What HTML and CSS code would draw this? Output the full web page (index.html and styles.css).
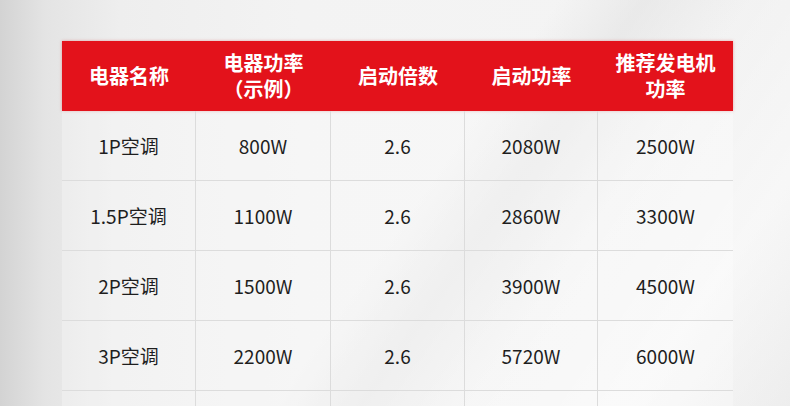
FILE: index.html
```html
<!DOCTYPE html>
<html lang="zh">
<head>
<meta charset="utf-8">
<link rel="stylesheet" href="styles.css">
</head>
<body>
<div class="page">
  <div class="table">
    <div class="head">
      <div class="hc">电器名称</div>
      <div class="hc">电器功率<br>（示例）</div>
      <div class="hc">启动倍数</div>
      <div class="hc">启动功率</div>
      <div class="hc">推荐发电机<br>功率</div>
    </div>
    <div class="row"><div class="c">1P空调</div><div class="c">800W</div><div class="c">2.6</div><div class="c">2080W</div><div class="c">2500W</div></div>
    <div class="row"><div class="c">1.5P空调</div><div class="c">1100W</div><div class="c">2.6</div><div class="c">2860W</div><div class="c">3300W</div></div>
    <div class="row"><div class="c">2P空调</div><div class="c">1500W</div><div class="c">2.6</div><div class="c">3900W</div><div class="c">4500W</div></div>
    <div class="row"><div class="c">3P空调</div><div class="c">2200W</div><div class="c">2.6</div><div class="c">5720W</div><div class="c">6000W</div></div>
    <div class="row"><div class="c"></div><div class="c"></div><div class="c"></div><div class="c"></div><div class="c"></div></div>
  </div>
</div>
</body>
</html>
```

FILE: styles.css
```css
html, body {
  margin: 0;
  padding: 0;
}
body {
  width: 790px;
  height: 406px;
  overflow: hidden;
  font-family: "Noto Sans CJK SC", "Noto Sans", sans-serif;
  background:
    linear-gradient(125deg, rgba(255,255,255,0) 0%, rgba(255,255,255,0) 52%, rgba(225,225,225,0.55) 60%, rgba(255,255,255,0) 70%, rgba(255,255,255,0.4) 85%, rgba(230,230,230,0.4) 100%),
    linear-gradient(to right, #d3d3d3 0px, #e4e4e4 45px, #eeeeee 120px, #f3f3f3 300px, #f4f4f4 600px, #f2f2f2 790px);
}
.page {
  padding: 41px 0 0 62px;
}
.table {
  width: 671px;
}
.head {
  display: grid;
  grid-template-columns: 134px 135px 134px 133px 135px;
  height: 70px;
  background: #e3121b;
  box-shadow: 0 0 3px rgba(200, 30, 30, 0.35);
}
.hc {
  display: flex;
  align-items: center;
  justify-content: center;
  text-align: center;
  color: #ffffff;
  font-weight: 700;
  font-size: 20px;
  line-height: 26px;
}
.row {
  display: grid;
  grid-template-columns: 134px 135px 134px 133px 135px;
  height: 70px;
  border-bottom: 1px solid #dcdcdc;
  box-sizing: border-box;
}
.c {
  display: flex;
  align-items: center;
  justify-content: center;
  font-size: 19px;
  color: #1e1e1e;
  background: rgba(255, 255, 255, 0.28);
  border-right: 1px solid #dcdcdc;
}
.c:last-child {
  border-right: none;
}
```
